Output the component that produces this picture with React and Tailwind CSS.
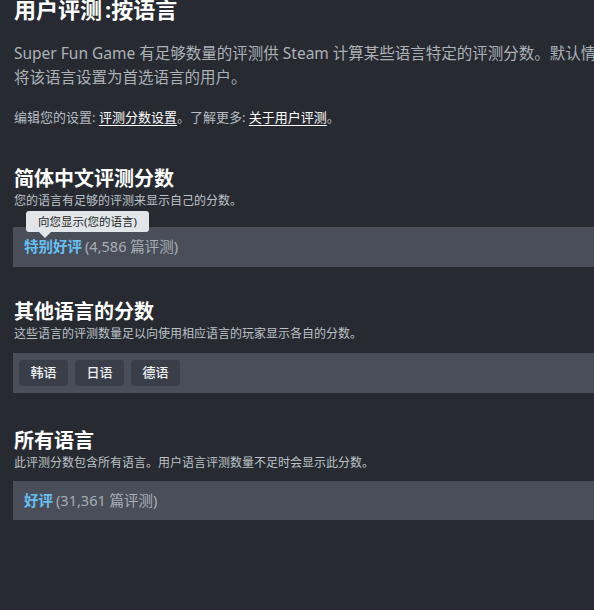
const font = {
  fontFamily: '"Noto Sans", "Noto Sans CJK SC", sans-serif',
};

function ScoreHeading({ title, sub, className = "" }) {
  return (
    <div className={className}>
      <h2 className="text-[20px] font-bold leading-[26px] text-white">{title}</h2>
      <p className="mt-px text-[12px] leading-4 text-[#bcc2c8]">{sub}</p>
    </div>
  );
}

function ScorePanel({ label, count, className = "" }) {
  return (
    <div className={`flex h-10 items-center bg-[#4a4e59] px-[11px] text-[14.5px] ${className}`}>
      <span className="font-bold text-[#66c0f4]">{label}</span>
      <span className="ml-[3px] text-[#a8afb7]">({count} 篇评测)</span>
    </div>
  );
}

export default function App() {
  const languages = ["韩语", "日语", "德语"];

  return (
    <div className="h-[610px] w-full overflow-hidden bg-[#272a31]" style={font}>
      <div className="w-[800px] pl-[13px]">
        <h1 className="-mt-1 pl-px text-[22px] font-bold leading-[26px] text-white">
          用户评测<span className="ml-[3px]">:</span>按语言
        </h1>

        <p className="mt-[19px] whitespace-nowrap pl-px text-[15.5px] leading-6 text-[#acb2b8]">
          Super Fun Game 有足够数量的评测供 Steam 计算某些语言特定的评测分数。默认情况下，这些分数会显示给
          <br />
          将该语言设置为首选语言的用户。
        </p>

        <p className="mt-[18px] pl-px text-[13px] leading-5 text-[#b5bcc3]">
          编辑您的设置:{" "}
          <a className="text-white underline underline-offset-[3px]">评测分数设置</a>
          。了解更多:{" "}
          <a className="text-white underline underline-offset-[3px]">关于用户评测</a>
          。
        </p>

        <ScoreHeading
          className="mt-[39px] pl-px"
          title="简体中文评测分数"
          sub="您的语言有足够的评测来显示自己的分数。"
        />
        <div className="relative mt-[18px]">
          <ScorePanel label="特别好评" count="4,586" />
          <div className="absolute -top-4 left-[13px] flex h-[21px] w-[123px] items-center justify-center rounded-[3px] bg-[#e3e6e9] text-[11.5px] text-[#1c1f24]">
            向您显示(您的语言)
            <span className="absolute left-[13px] top-full h-0 w-0 border-x-[6px] border-t-[6px] border-x-transparent border-t-[#e3e6e9]" />
          </div>
        </div>

        <ScoreHeading
          className="mt-[32px] pl-px"
          title="其他语言的分数"
          sub="这些语言的评测数量足以向使用相应语言的玩家显示各自的分数。"
        />
        <div className="mt-[11px] flex h-10 items-center gap-[7px] bg-[#4a4e59] px-[6px]">
          {languages.map((lang) => (
            <span
              key={lang}
              className="flex h-[26px] w-[49px] items-center justify-center rounded-[3px] bg-[#3a3e48] text-[13px] font-medium text-[#eef0f2]"
            >
              {lang}
            </span>
          ))}
        </div>

        <ScoreHeading
          className="mt-[35px] pl-px"
          title="所有语言"
          sub="此评测分数包含所有语言。用户语言评测数量不足时会显示此分数。"
        />
        <ScorePanel className="mt-[10px] h-[39px]" label="好评" count="31,361" />
      </div>
    </div>
  );
}
